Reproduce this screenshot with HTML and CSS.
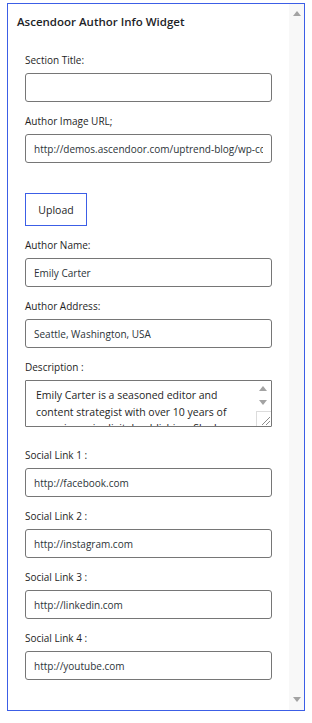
FILE: index.html
```html
<!DOCTYPE html>
<html lang="en">
<head>
    <meta charset="UTF-8">
    <meta name="viewport" content="width=device-width, initial-scale=1.0">
    <title>Ascendoor Author Info Widget</title>
    <link rel="stylesheet" href="styles.css">
</head>
<body>
    <div class="widget-panel">
        <div class="widget-content">
            <h3 class="widget-title">Ascendoor Author Info Widget</h3>

            <form class="widget-form">
                <div class="field">
                    <label for="sectionTitle">Section Title:</label>
                    <input id="sectionTitle" type="text" value="">
                </div>

                <div class="field">
                    <label for="authorImage">Author Image URL;</label>
                    <input id="authorImage" type="text" value="http://demos.ascendoor.com/uptrend-blog/wp-content/uploads/sites/42/2024/05/author.jpg">
                </div>

                <div class="upload-row">
                    <button type="button" class="uploadButton">Upload</button>
                </div>

                <div class="field">
                    <label for="authorName">Author Name:</label>
                    <input id="authorName" type="text" value="Emily Carter">
                </div>

                <div class="field">
                    <label for="authorAddress">Author Address:</label>
                    <input id="authorAddress" type="text" value="Seattle, Washington, USA">
                </div>

                <div class="field field-desc">
                    <label for="description">Description :</label>
                    <div class="textarea-box">
                        <textarea id="description">Emily Carter is a seasoned editor and content strategist with over 10 years of experience in digital publishing. She has worked with leading media brands.</textarea>
                        <div class="ta-scroll">
                            <span class="arrow-up"></span>
                            <span class="arrow-down"></span>
                            <span class="resize-grip">
                                <svg width="13" height="13" viewBox="0 0 13 13">
                                    <line x1="4" y1="12" x2="12" y2="4" stroke="#8c8c8c" stroke-width="1"/>
                                    <line x1="8" y1="12" x2="12" y2="8" stroke="#8c8c8c" stroke-width="1"/>
                                </svg>
                            </span>
                        </div>
                    </div>
                </div>

                <div class="field">
                    <label for="social1">Social Link 1 :</label>
                    <input id="social1" type="text" value="http://facebook.com">
                </div>

                <div class="field">
                    <label for="social2">Social Link 2 :</label>
                    <input id="social2" type="text" value="http://instagram.com">
                </div>

                <div class="field">
                    <label for="social3">Social Link 3 :</label>
                    <input id="social3" type="text" value="http://linkedin.com">
                </div>

                <div class="field">
                    <label for="social4">Social Link 4 :</label>
                    <input id="social4" type="text" value="http://youtube.com">
                </div>
            </form>
        </div>

        <div class="scrollbar">
            <span class="arrow-up"></span>
            <span class="arrow-down"></span>
        </div>
    </div>
</body>
</html>
```

FILE: styles.css
```css
body {
    margin: 0;
    padding: 0;
    background: #fff;
    font-family: 'Open Sans', 'Noto Sans', sans-serif;
    color: #1e1e1e;
}

.widget-panel {
    display: flex;
    width: 298px;
    height: 708px;
    margin: 3px 0 0 7px;
    border: 1px solid #3c5ee6;
    box-sizing: border-box;
    overflow: hidden;
}

.widget-content {
    flex: 1;
    padding: 9px 0 0 9px;
}

.widget-title {
    margin: 0;
    font-size: 11.5px;
    font-weight: 600;
    line-height: 18px;
    color: #1d2327;
}

.widget-form {
    padding: 22px 0 0 8px;
}

.field {
    display: flex;
    flex-direction: column;
    margin-bottom: 12px;
}

label {
    font-size: 10px;
    line-height: 15px;
    margin-bottom: 5px;
    color: #1e1e1e;
}

input[type="text"] {
    width: 247px;
    height: 29px;
    box-sizing: border-box;
    padding: 0 8px;
    font-family: 'Open Sans', 'Noto Sans', sans-serif;
    font-size: 10px;
    color: #2c3338;
    border: 1px solid #767676;
    border-radius: 3px;
    background: #fff;
    outline: none;
}

.upload-row {
    padding: 18px 0 12px;
}

.uploadButton {
    width: 62px;
    height: 33px;
    font-family: 'Open Sans', 'Noto Sans', sans-serif;
    font-size: 10.5px;
    color: #1e1e1e;
    background: #fff;
    border: 1px solid #3c5ee6;
    border-radius: 0;
    padding: 0;
}

.field-desc {
    margin-bottom: 21px;
}

.textarea-box {
    display: flex;
    width: 247px;
    height: 47px;
    box-sizing: border-box;
    border: 1px solid #767676;
    border-radius: 1px;
    overflow: hidden;
}

textarea {
    flex: 1;
    border: none;
    resize: none;
    outline: none;
    overflow: hidden;
    padding: 6px 0 0 10px;
    margin: 0;
    font-family: 'Open Sans', 'Noto Sans', sans-serif;
    font-size: 10.5px;
    line-height: 16.5px;
    color: #1e1e1e;
}

.ta-scroll {
    width: 16px;
    display: flex;
    flex-direction: column;
    align-items: center;
    background: #fff;
}

.ta-scroll .arrow-up {
    margin-top: 5px;
}

.ta-scroll .arrow-down {
    margin-top: 9px;
}

.resize-grip {
    margin-top: auto;
    width: 15px;
    height: 15px;
    border-top: 1px solid #dcdcdc;
    border-left: 1px solid #dcdcdc;
    box-sizing: border-box;
    display: flex;
    align-items: flex-end;
    justify-content: flex-end;
}

.resize-grip svg {
    display: block;
}

.scrollbar {
    width: 15px;
    background: #f8f8f8;
    display: flex;
    flex-direction: column;
    align-items: center;
    justify-content: space-between;
    padding: 7px 0 8px;
    box-sizing: border-box;
}

.arrow-up,
.arrow-down {
    width: 0;
    height: 0;
    border-left: 4.5px solid transparent;
    border-right: 4.5px solid transparent;
}

.arrow-up {
    border-bottom: 5px solid #a3a3a3;
}

.arrow-down {
    border-top: 5px solid #a3a3a3;
}
```
